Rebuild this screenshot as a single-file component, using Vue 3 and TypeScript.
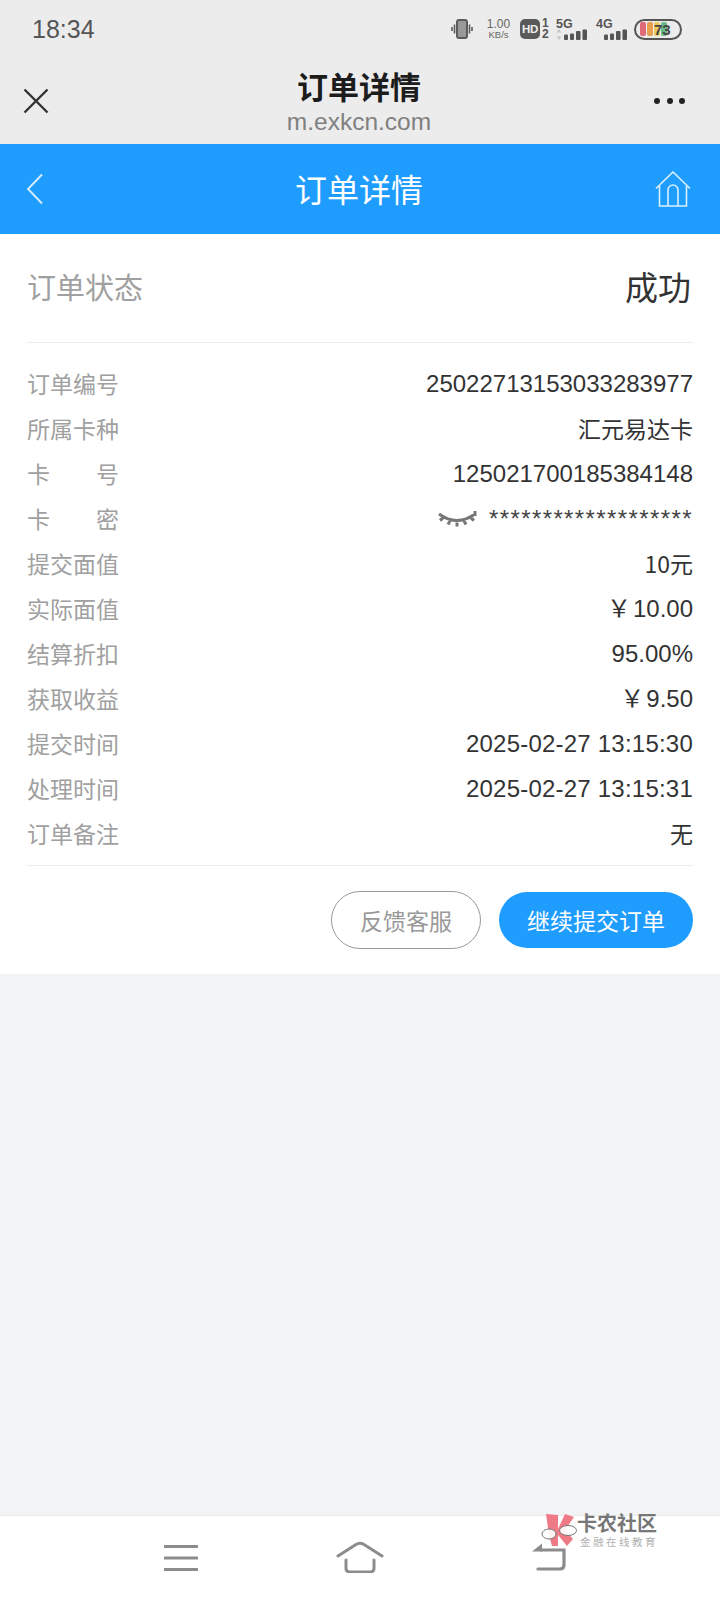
<script setup lang="ts">
interface Row { label: string; value: string; spaced?: boolean; secret?: boolean; cjk?: boolean; wide?: boolean }
const rows: Row[] = [
  { label: '订单编号', value: '2502271315303328' + '3977' },
  { label: '所属卡种', value: '汇元易达卡', cjk: true },
  { label: '卡号', value: '125021700185384148', spaced: true },
  { label: '卡密', value: '*******************', spaced: true, secret: true },
  { label: '提交面值', value: '10元', cjk: true },
  { label: '实际面值', value: '￥\u200a10.00' },
  { label: '结算折扣', value: '95.00%' },
  { label: '获取收益', value: '￥\u200a9.50' },
  { label: '提交时间', value: '2025-02-27 13:15:30', wide: true },
  { label: '处理时间', value: '2025-02-27 13:15:31', wide: true },
  { label: '订单备注', value: '无', cjk: true },
]
</script>

<template>
  <div class="page">
    <div class="top">
      <div class="status">
        <span class="time">18:34</span>
        <div class="sys">
          <svg class="i-vib" width="22" height="20" viewBox="0 0 22 20">
            <rect x="6" y="1" width="10" height="18" rx="2" fill="#999" stroke="#5c5c5c" stroke-width="2" />
            <path d="M3.500 5.500v9M1 8v4M18.500 5.500v9M21 8v4" stroke="#5c5c5c" stroke-width="1.600" />
          </svg>
          <div class="speed"><span>1.00</span><span class="kb">KB/s</span></div>
          <div class="hd">HD</div>
          <div class="sim"><span>1</span><span>2</span></div>
          <div class="net five">
            <span class="g">5G</span>
            <svg width="31" height="11" viewBox="0 0 31 11">
              <path d="M3 0l2.500 3.500h-5zM3 11L.5 7.500h5z" fill="#c4c4c4" />
              <rect x="8" y="5.500" width="4" height="5.500" rx="1" fill="#555" />
              <rect x="14" y="4.500" width="4" height="6.500" rx="1" fill="#555" />
              <rect x="20" y="2" width="4.500" height="9" rx="1" fill="#555" />
              <rect x="26.500" y=".5" width="4.500" height="10.500" rx="1" fill="#555" />
            </svg>
          </div>
          <div class="net four">
            <span class="g">4G</span>
            <svg width="31" height="11" viewBox="0 0 31 11">
              <rect x="8" y="5.500" width="4" height="5.500" rx="1" fill="#555" />
              <rect x="14" y="4.500" width="4" height="6.500" rx="1" fill="#555" />
              <rect x="20" y="2" width="4.500" height="9" rx="1" fill="#555" />
              <rect x="26.500" y=".5" width="4.500" height="10.500" rx="1" fill="#555" />
            </svg>
          </div>
          <div class="battery">
            <i class="b1"></i><i class="b2"></i><i class="b3"></i><i class="b4"></i>
            <span>73</span>
          </div>
        </div>
      </div>
      <div class="wxbar">
        <svg class="close" width="26" height="26" viewBox="0 0 26 26">
          <path d="M1.500 1.500l23 23M24.500 1.500l-23 23" stroke="#333" stroke-width="2.400" fill="none" />
        </svg>
        <div class="titles">
          <div class="wxtitle">订单详情</div>
          <div class="domain">m.exkcn.com</div>
        </div>
        <div class="dots"><i></i><i></i><i></i></div>
      </div>
    </div>

    <div class="bluebar">
      <svg width="18" height="32" viewBox="0 0 18 32">
        <path d="M16 1.500L2 16l14 14.500" stroke="#d8efff" stroke-width="1.800" fill="none" />
      </svg>
      <div class="bluetitle">订单详情</div>
      <svg width="36" height="36" viewBox="0 0 36 36">
        <path d="M1 17.500L18 1l17 16.500M4.500 15v20h27V15M13 35V19a5 5 0 0 1 10 0v16" stroke="#d8efff" stroke-width="1.600" fill="none" />
      </svg>
    </div>

    <div class="card">
      <div class="state">
        <span class="state-l">订单状态</span>
        <span class="state-v">成功</span>
      </div>
      <div class="rows">
        <div v-for="r in rows" :key="r.label" class="row">
          <span class="lab" :class="{ spaced: r.spaced }">
            <template v-if="r.spaced"><span>{{ r.label[0] }}</span><span>{{ r.label[1] }}</span></template>
            <template v-else>{{ r.label }}</template>
          </span>
          <span class="val" :class="{ secret: r.secret, cjk: r.cjk, wide: r.wide }">
            <svg v-if="r.secret" class="eye" width="40" height="20" viewBox="0 0 40 20">
              <path d="M2 4q18 13 36 0M6.500 7.500L3 10.500M13 11l-2 3.500M20 12.500v4M27 11l2 3.500M33.500 7.500l3.500 3M38 1v5" stroke="#777" stroke-width="3" fill="none" />
            </svg>
            <span>{{ r.value }}</span>
          </span>
        </div>
      </div>
      <div class="actions">
        <div class="btn ghost">反馈客服</div>
        <div class="btn solid">继续提交订单</div>
      </div>
    </div>

    <div class="fill"></div>

    <div class="nav">
      <svg class="n1" width="34" height="28" viewBox="0 0 34 28">
        <path d="M1 2.500h32M1 14h32M1 25.500h32" stroke="#8c8c8c" stroke-width="3" stroke-linecap="round" />
      </svg>
      <svg class="n2" width="48" height="32" viewBox="0 0 48 32">
        <path d="M2 15L20 3.500q4-2.500 8 0L46 15M10 19v8q0 4 4 4h20q4 0 4-4v-8" stroke="#8c8c8c" stroke-width="3" fill="none" stroke-linecap="round" />
      </svg>
      <svg class="n3" width="36" height="34" viewBox="0 0 36 34">
        <path d="M6 30h22q4 0 4-4V11H9" stroke="#8c8c8c" stroke-width="3.200" fill="none" stroke-linecap="round" />
        <path d="M10 4.500v8H0z" fill="#8c8c8c" />
      </svg>
      <div class="mark">
        <svg width="36" height="34" viewBox="0 0 36 34" class="flower">
          <path d="M5 0l12 1v14L24 0l9 3-9 13 8 9-6 7-9-11v11h-6L8 21z" fill="#ee7a85" />
          <ellipse cx="8" cy="20" rx="7" ry="5" fill="#fff" fill-opacity=".9" stroke="#777" stroke-width="1" />
          <ellipse cx="27" cy="16.500" rx="8.500" ry="5" fill="#fff" fill-opacity=".9" stroke="#777" stroke-width="1" />
        </svg>
        <div class="mark-text">
          <div class="mt1">卡农社区</div>
          <div class="mt2">金融在线教育</div>
        </div>
      </div>
    </div>
  </div>
</template>

<style scoped>
.page {
  width: 720px;
  height: 1600px;
  display: flex;
  flex-direction: column;
  background: #f2f3f5;
  font-family: "Noto Sans CJK SC", "Liberation Sans", sans-serif;
  overflow: hidden;
}
.top { height: 144px; background: #ececec; flex: none; }
.status {
  height: 58px;
  display: flex;
  align-items: center;
  justify-content: space-between;
  padding: 0 38px 0 32px;
}
.time { font: 400 25px "Liberation Sans", Roboto, sans-serif; color: #555; }
.sys { display: flex; align-items: center; color: #555; font-family: "Liberation Sans", sans-serif; }
.speed { display: flex; flex-direction: column; align-items: center; margin-left: 14px; font-size: 12px; line-height: 11px; color: #666; width: 23px; }
.speed .kb { font-size: 9.500px; line-height: 10px; }
.hd { margin-left: 10px; width: 20px; height: 20px; border-radius: 5px; background: #5a5a5a; color: #eee; font: 700 11.500px/20px "Liberation Sans", sans-serif; text-align: center; letter-spacing: -.3px; }
.sim { display: flex; flex-direction: column; font: 700 12px/11px "Liberation Sans", sans-serif; margin-left: 2px; width: 7px; }
.net { display: flex; flex-direction: column; margin-left: 7px; height: 21px; width: 31px; }
.net .g { font: 700 12.500px/10px "Liberation Sans", sans-serif; }
.four { margin-left: 9px; }
.net svg { display: block; margin-top: 0; }
.battery {
  margin-left: 7px;
  width: 48px;
  height: 21px;
  box-sizing: border-box;
  border: 2px solid #555;
  border-radius: 10.500px;
  padding: 1.500px 4px;
  display: flex;
  gap: 1px;
  position: relative;
}
.battery i { width: 6px; height: 14px; border-radius: 2px; display: block; }
.b1 { background: #df6a78; }
.b2 { background: #e8a04f; }
.b3 { background: #eccc5a; }
.b4 { background: #68b888; }
.battery span { position: absolute; left: 18px; top: -1px; font: 700 15px/19px "Liberation Sans", sans-serif; color: #444; letter-spacing: -.2px; }
.wxbar {
  height: 86px;
  display: flex;
  align-items: center;
  justify-content: space-between;
  padding: 0 35px 0 23px;
  position: relative;
}
.titles { position: absolute; left: -1px; right: 1px; top: 8px; text-align: center; }
.wxtitle { font-size: 31px; line-height: 40px; font-weight: 700; color: #1c1c1c; }
.domain { font: 400 24.500px/28px "Liberation Sans", Roboto, sans-serif; color: #808080; margin-top: 2px; }
.dots { display: flex; gap: 6.500px; }
.dots i { width: 6px; height: 6px; border-radius: 50%; background: #222; display: block; }

.bluebar {
  flex: none;
  height: 90px;
  background: #1f9dff;
  display: flex;
  align-items: center;
  justify-content: space-between;
  padding: 0 29px 0 26px;
  position: relative;
}
.bluetitle { position: absolute; left: -1px; right: 1px; text-align: center; color: #fff; font-size: 32px; line-height: 90px; top: -1px; }

.card { flex: none; background: #fff; padding: 0 27px; height: 740px; box-sizing: border-box; }
.state {
  height: 109px;
  box-sizing: border-box;
  border-bottom: 1px solid #ececec;
  display: flex;
  align-items: center;
  justify-content: space-between;
}
.state-l { font-size: 29px; color: #a0a0a0; margin-top: -4px; }
.state-v { font-size: 33px; color: #333; margin: -4px 2px 0 0; }
.rows { padding: 19px 0 8px; border-bottom: 1px solid #ececec; }
.row { height: 45px; display: flex; align-items: center; justify-content: space-between; }
.lab { width: 92px; font-size: 23px; line-height: 32px; margin-top: -4px; color: #a0a0a0; display: flex; justify-content: space-between; white-space: nowrap; }
.val { font: 400 24px/32px "Liberation Sans", "Noto Sans CJK SC", sans-serif; color: #333; display: flex; align-items: center; white-space: nowrap; margin-top: -2px; }
.cjk { font-size: 23px; font-family: "Noto Sans CJK SC", "Liberation Sans", sans-serif; margin-top: -4px; }
.wide { letter-spacing: .22px; }
.secret span { font-size: 24px; letter-spacing: 1.400px; line-height: 32px; color: #444; }
.eye { margin: 2px 12px 0 0; }
.actions { display: flex; justify-content: flex-end; gap: 18px; padding-top: 25px; align-items: center; }
.btn { border-radius: 29px; display: flex; align-items: center; justify-content: center; font-size: 23px; box-sizing: border-box; }
.ghost { width: 150px; height: 58px; border: 1px solid #999; color: #999; }
.solid { width: 194px; height: 56px; background: #1f9dff; color: #fff; }

.fill { flex: 1; }
.nav {
  flex: none;
  height: 85px;
  background: #fff;
  border-top: 1px solid #ececec;
  position: relative;
  box-sizing: border-box;
}
.n1 { position: absolute; left: 164px; top: 28px; }
.n2 { position: absolute; left: 336px; top: 25px; }
.n3 { position: absolute; left: 532px; top: 23px; }
.mark { position: absolute; left: 541px; top: -3px; display: flex; align-items: flex-start; }
.flower { margin-top: 1px; flex: none; }
.mark-text { font-family: "Liberation Sans", "Noto Sans CJK SC", sans-serif; }
.mt1 { font-size: 20px; line-height: 23px; font-weight: 700; color: #777; white-space: nowrap; }
.mt2 { font-size: 10.500px; line-height: 12px; margin-left: 3px; color: #b0b0b0; letter-spacing: 2.500px; white-space: nowrap; }
</style>
